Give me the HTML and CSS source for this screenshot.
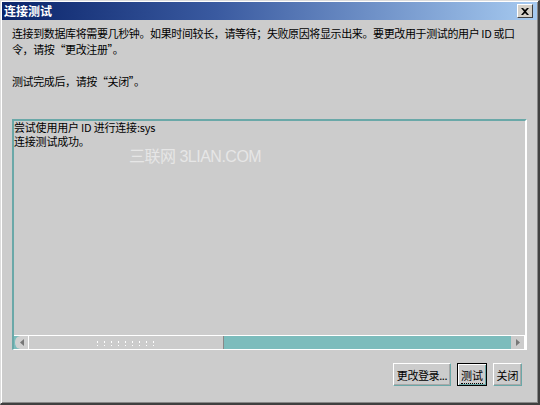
FILE: index.html
```html
<!DOCTYPE html>
<html>
<head>
<meta charset="utf-8">
<link rel="stylesheet" href="styles.css">
</head>
<body>
<div class="window">
  <div class="titlebar">
    <span class="title">连接测试</span>
    <span class="close">
      <svg width="8" height="7" viewBox="0 0 8 7"><path d="M0 0h2l2 2 2-2h2L5 3.5 8 7H6L4 5 2 7H0l3-3.5z" fill="#000"/></svg>
    </span>
  </div>
  <div class="content">
    <p class="msg">连接到数据库将需要几秒钟。如果时间较长，请等待；失败原因将显示出来。要更改用于测试的用户 ID 或口<br>令，请按“更改注册”。</p>
    <p class="msg msg2">测试完成后，请按“关闭”。</p>
    <div class="log">
      <div class="log-text">
        <div>尝试使用用户 ID 进行连接:sys</div>
        <div>连接测试成功。</div>
      </div>
      <div class="hscroll">
        <span class="arrow left"><svg width="4" height="7" viewBox="0 0 4 7"><path d="M4 0v7L0 3.5z" fill="#777"/></svg></span>
        <span class="thumb"><span class="grip"></span></span>
        <span class="track"></span>
        <span class="arrow right"><svg width="4" height="7" viewBox="0 0 4 7"><path d="M0 0v7l4-3.5z" fill="#777"/></svg></span>
      </div>
    </div>
    <div class="buttons">
      <button class="btn b1">更改登录...</button>
      <button class="btn b2 default"><span class="focus">测试</span></button>
      <button class="btn b3">关闭</button>
    </div>
  </div>
  <div class="watermark">三联网 3LIAN.COM</div>
</div>
</body>
</html>
```
FILE: styles.css
```css
html, body {
  margin: 0;
  padding: 0;
  width: 540px;
  height: 405px;
  overflow: hidden;
  background: #cccccc;
  font-family: "Noto Sans CJK SC", "Liberation Sans", sans-serif;
}
.window {
  position: relative;
  box-sizing: border-box;
  width: 540px;
  height: 405px;
  background: #cccccc;
  border-top: 1px solid #dcdcdc;
  border-left: 1px solid #dcdcdc;
  border-right: 2px solid #404040;
  border-bottom: 2px solid #404040;
  box-shadow: inset 1px 1px 0 #ffffff, inset -1px -1px 0 #888888;
  padding: 1px 1px 1px 1px;
}
.titlebar {
  height: 18px;
  background: linear-gradient(to right, #0a246a 0%, #3a5aa0 40%, #a6caf0 100%);
  display: flex;
  align-items: center;
  justify-content: space-between;
  padding: 0 4px 0 2px;
}
.title {
  color: #fff;
  font-weight: bold;
  font-size: 12px;
  line-height: 18px;
}
.close {
  box-sizing: border-box;
  width: 16px;
  height: 14px;
  background: #d4d0c8;
  border-top: 1px solid #fff;
  border-left: 1px solid #fff;
  border-right: 1px solid #404040;
  border-bottom: 1px solid #404040;
  display: flex;
  align-items: center;
  justify-content: center;
}
.content {
  padding: 0 10px 0 10px;
}
.msg {
  margin: 0;
  font-size: 11px;
  line-height: 16px;
  color: #000;
  letter-spacing: -0.38px;
  padding-top: 5px;
  white-space: nowrap;
}
.msg2 {
  padding-top: 16px;
}
.log {
  margin-top: 30px;
  height: 231px;
  box-sizing: border-box;
  border-top: 2px solid #6aa8a8;
  border-left: 2px solid #6aa8a8;
  border-right: 2px solid #ffffff;
  border-bottom: 1px solid #ffffff;
  display: flex;
  flex-direction: column;
}
.log-text {
  flex: 1;
  font-size: 11px;
  line-height: 14px;
  letter-spacing: -0.2px;
  white-space: nowrap;
  margin-top: -1px;
}
.hscroll {
  height: 13px;
  display: flex;
  background: #7cbcbc;
  border-top: 1px solid #ffffff;
}
.arrow {
  width: 14px;
  box-sizing: border-box;
  display: flex;
  align-items: center;
  justify-content: center;
  background: #cccccc;
}
.arrow.left {
  border-radius: 6px 0 0 6px;
  border-left: 1px solid #7cbcbc;
  background: #d0d0d0;
}
.arrow.right {
  border-right: 1px solid #ffffff;
}
.thumb {
  width: 196px;
  box-sizing: border-box;
  background: #cccccc;
  border-left: 1px solid #ffffff;
  border-right: 1px solid #888888;
  display: flex;
  align-items: center;
  justify-content: center;
}
.grip {
  width: 64px;
  height: 6px;
  background-image: radial-gradient(circle, #ffffff 0.8px, transparent 1px);
  background-size: 7px 4px;
}
.track {
  flex: 1;
}
.buttons {
  display: flex;
  justify-content: flex-end;
  gap: 6px;
  margin-top: 13px;
  padding-right: 5px;
}
.btn {
  box-sizing: border-box;
  height: 23px;
  background: #cccccc;
  font-family: "Noto Sans CJK SC", "Liberation Sans", sans-serif;
  font-size: 11px;
  color: #000;
  padding: 0;
  white-space: nowrap;
  border-top: 1px solid #ffffff;
  border-left: 1px solid #ffffff;
  border-right: 1px solid #6aa8a8;
  border-bottom: 1px solid #6aa8a8;
  box-shadow: inset -1px -1px 0 #a8a8a8;
  line-height: 18px;
  text-align: center;
}
.b1 { width: 58px; letter-spacing: -0.4px; }
.b2 {
  width: 30px;
  border: 1px solid #000;
  box-shadow: inset 1px 1px 0 #ffffff, inset -1px -1px 0 #6aa8a8;
}
.b3 { width: 29px; }
.focus {
  display: inline-block;
  border-bottom: 1px dotted #000;
  line-height: 15px;
}
.watermark {
  position: absolute;
  left: 128px;
  top: 142px;
  font-family: "Liberation Sans", "Noto Sans CJK SC", sans-serif;
  font-size: 16px;
  color: #e6e6e6;
  letter-spacing: -0.5px;
}
```
